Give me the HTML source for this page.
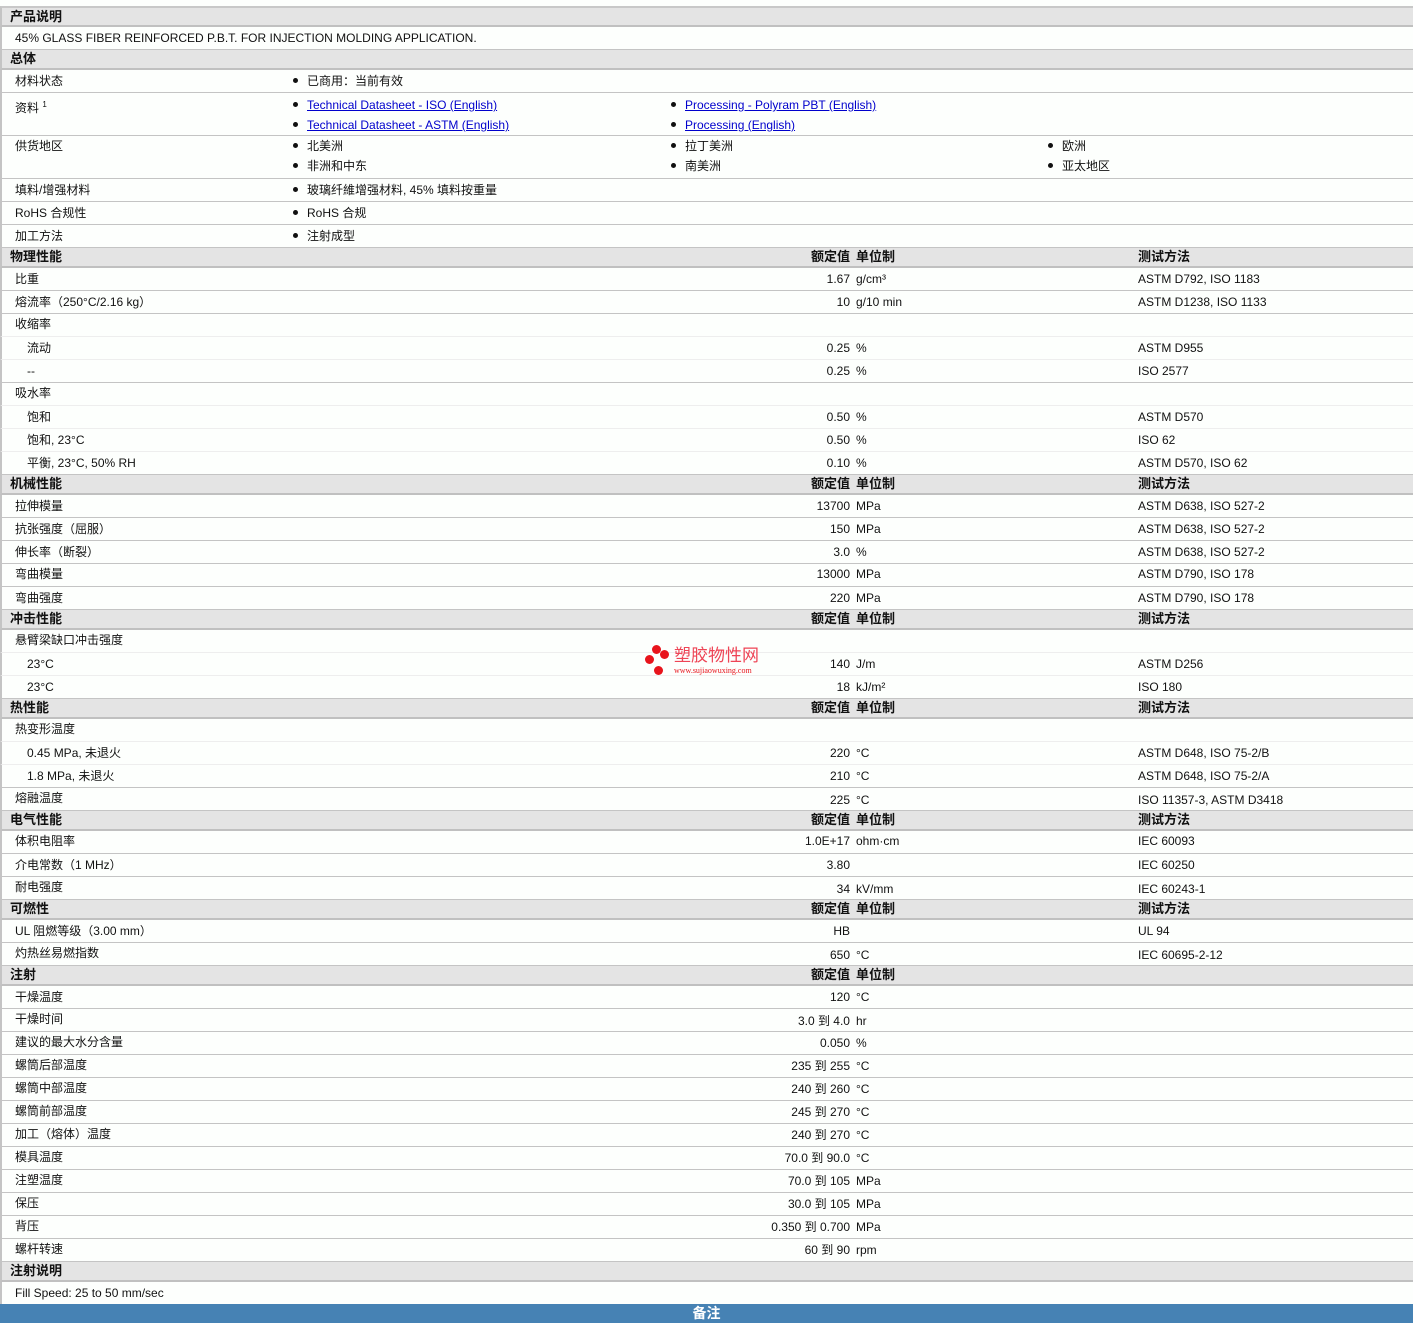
<!DOCTYPE html>
<html><head><meta charset="utf-8"><style>
*{margin:0;padding:0;box-sizing:border-box}
body{width:1413px;height:1323px;background:#fdfffd;font-family:"Liberation Sans","Noto Sans CJK SC",sans-serif;font-size:12px;color:#111;position:relative;overflow:hidden}
.row{position:absolute;left:0;width:1413px;border-bottom:1px solid #c4c4c4;border-left:2px solid #c4c4c4}
.h{background:#e4e4e4;border-bottom:2px solid #c0c0c0;font-weight:bold;font-size:13px}
.h.top{border-top:2px solid #c8c8c8}
.row span{position:absolute;white-space:nowrap}
.l{left:13px}.s{left:25px}.t{left:8px}
.v{right:563px;text-align:right}
.u{left:854px}.m{left:1136px}
.b1{left:291px}.b2{left:669px}.b3{left:1046px}
.b1:before,.b2:before,.b3:before{content:"";display:inline-block;width:5px;height:5px;border-radius:50%;background:#111;margin-right:9px;vertical-align:2px}
a{color:#00c;text-decoration:underline}
.blue{position:absolute;left:0;top:1304px;width:1413px;height:19px;background:#4682b4;color:#fff;font-weight:bold;text-align:center;font-size:14px;line-height:18px}
.wm{position:absolute;left:645px;top:645px;width:130px;height:35px}
.dot{position:absolute;width:9px;height:9px;border-radius:50%;background:#e8141c}
</style></head><body>

<div class="row h top" style="top:6px;height:21px;line-height:18px"><span class="t">产品说明</span></div>
<div class="row" style="top:27px;height:23px;line-height:22px"><span class="l">45% GLASS FIBER REINFORCED P.B.T. FOR INJECTION MOLDING APPLICATION.</span></div>
<div class="row h" style="top:50px;height:20px;line-height:18px"><span class="t">总体</span></div>
<div class="row" style="top:70px;height:23px;line-height:22px"><span class="l">材料状态</span><span class="b1">已商用：当前有效</span></div>
<div class="row" style="top:93px;height:43px;line-height:20px"><span class="l" style="top:2px">资料 <sup style="font-size:8px">1</sup></span>
<span class="b1" style="top:2px"><a>Technical Datasheet - ISO (English)</a></span><span class="b1" style="top:22px"><a>Technical Datasheet - ASTM (English)</a></span>
<span class="b2" style="top:2px"><a>Processing - Polyram PBT (English)</a></span><span class="b2" style="top:22px"><a>Processing (English)</a></span></div>
<div class="row" style="top:136px;height:43px;line-height:20px"><span class="l" style="top:0">供货地区</span>
<span class="b1" style="top:0">北美洲</span><span class="b1" style="top:20px">非洲和中东</span>
<span class="b2" style="top:0">拉丁美洲</span><span class="b2" style="top:20px">南美洲</span>
<span class="b3" style="top:0">欧洲</span><span class="b3" style="top:20px">亚太地区</span></div>
<div class="row" style="top:179px;height:23px;line-height:22px"><span class="l">填料/增强材料</span><span class="b1">玻璃纤維增强材料, 45% 填料按重量</span></div>
<div class="row" style="top:202px;height:23px;line-height:22px"><span class="l">RoHS 合规性</span><span class="b1">RoHS 合规</span></div>
<div class="row" style="top:225px;height:23px;line-height:22px"><span class="l">加工方法</span><span class="b1">注射成型</span></div>

<div class="row h" style="top:248px;height:20px;line-height:18px"><span class="t">物理性能</span><span class="v">额定值</span><span class="u">单位制</span><span class="m">测试方法</span></div>
<div class="row" style="top:268px;height:23px;line-height:22px"><span class="l">比重</span><span class="v">1.67</span><span class="u">g/cm³</span><span class="m">ASTM D792, ISO 1183</span></div>
<div class="row" style="top:291px;height:23px;line-height:22px"><span class="l">熔流率（250°C/2.16 kg）</span><span class="v">10</span><span class="u">g/10 min</span><span class="m">ASTM D1238, ISO 1133</span></div>
<div class="row" style="top:314px;height:23px;line-height:20px;border-bottom-color:#eee"><span class="l">收缩率</span></div>
<div class="row" style="top:337px;height:23px;line-height:22px;border-bottom-color:#eee"><span class="s">流动</span><span class="v">0.25</span><span class="u">%</span><span class="m">ASTM D955</span></div>
<div class="row" style="top:360px;height:23px;line-height:22px"><span class="s">--</span><span class="v">0.25</span><span class="u">%</span><span class="m">ISO 2577</span></div>
<div class="row" style="top:383px;height:23px;line-height:20px;border-bottom-color:#eee"><span class="l">吸水率</span></div>
<div class="row" style="top:406px;height:23px;line-height:22px;border-bottom-color:#eee"><span class="s">饱和</span><span class="v">0.50</span><span class="u">%</span><span class="m">ASTM D570</span></div>
<div class="row" style="top:429px;height:23px;line-height:22px;border-bottom-color:#eee"><span class="s">饱和, 23°C</span><span class="v">0.50</span><span class="u">%</span><span class="m">ISO 62</span></div>
<div class="row" style="top:452px;height:23px;line-height:22px"><span class="s">平衡, 23°C, 50% RH</span><span class="v">0.10</span><span class="u">%</span><span class="m">ASTM D570, ISO 62</span></div>

<div class="row h" style="top:475px;height:20px;line-height:18px"><span class="t">机械性能</span><span class="v">额定值</span><span class="u">单位制</span><span class="m">测试方法</span></div>
<div class="row" style="top:495px;height:23px;line-height:22px"><span class="l">拉伸模量</span><span class="v">13700</span><span class="u">MPa</span><span class="m">ASTM D638, ISO 527-2</span></div>
<div class="row" style="top:518px;height:23px;line-height:22px"><span class="l">抗张强度（屈服）</span><span class="v">150</span><span class="u">MPa</span><span class="m">ASTM D638, ISO 527-2</span></div>
<div class="row" style="top:541px;height:23px;line-height:22px"><span class="l">伸长率（断裂）</span><span class="v">3.0</span><span class="u">%</span><span class="m">ASTM D638, ISO 527-2</span></div>
<div class="row" style="top:564px;height:23px;line-height:20px"><span class="l">弯曲模量</span><span class="v">13000</span><span class="u">MPa</span><span class="m">ASTM D790, ISO 178</span></div>
<div class="row" style="top:587px;height:23px;line-height:22px"><span class="l">弯曲强度</span><span class="v">220</span><span class="u">MPa</span><span class="m">ASTM D790, ISO 178</span></div>

<div class="row h" style="top:610px;height:20px;line-height:18px"><span class="t">冲击性能</span><span class="v">额定值</span><span class="u">单位制</span><span class="m">测试方法</span></div>
<div class="row" style="top:630px;height:23px;line-height:20px;border-bottom-color:#eee"><span class="l">悬臂梁缺口冲击强度</span></div>
<div class="row" style="top:653px;height:23px;line-height:22px;border-bottom-color:#eee"><span class="s">23°C</span><span class="v">140</span><span class="u">J/m</span><span class="m">ASTM D256</span></div>
<div class="row" style="top:676px;height:23px;line-height:22px"><span class="s">23°C</span><span class="v">18</span><span class="u">kJ/m²</span><span class="m">ISO 180</span></div>

<div class="row h" style="top:699px;height:20px;line-height:18px"><span class="t">热性能</span><span class="v">额定值</span><span class="u">单位制</span><span class="m">测试方法</span></div>
<div class="row" style="top:719px;height:23px;line-height:20px;border-bottom-color:#eee"><span class="l">热变形温度</span></div>
<div class="row" style="top:742px;height:23px;line-height:22px;border-bottom-color:#eee"><span class="s">0.45 MPa, 未退火</span><span class="v">220</span><span class="u">°C</span><span class="m">ASTM D648, ISO 75-2/B</span></div>
<div class="row" style="top:765px;height:23px;line-height:22px"><span class="s">1.8 MPa, 未退火</span><span class="v">210</span><span class="u">°C</span><span class="m">ASTM D648, ISO 75-2/A</span></div>
<div class="row" style="top:788px;height:23px;line-height:20px"><span class="l">熔融温度</span><span class="v" style="top:2px">225</span><span class="u" style="top:2px">°C</span><span class="m" style="top:2px">ISO 11357-3, ASTM D3418</span></div>

<div class="row h" style="top:811px;height:20px;line-height:18px"><span class="t">电气性能</span><span class="v">额定值</span><span class="u">单位制</span><span class="m">测试方法</span></div>
<div class="row" style="top:831px;height:23px;line-height:20px"><span class="l">体积电阻率</span><span class="v">1.0E+17</span><span class="u">ohm·cm</span><span class="m">IEC 60093</span></div>
<div class="row" style="top:854px;height:23px;line-height:22px"><span class="l">介电常数（1 MHz）</span><span class="v">3.80</span><span class="m">IEC 60250</span></div>
<div class="row" style="top:877px;height:23px;line-height:20px"><span class="l">耐电强度</span><span class="v" style="top:2px">34</span><span class="u" style="top:2px">kV/mm</span><span class="m" style="top:2px">IEC 60243-1</span></div>

<div class="row h" style="top:900px;height:20px;line-height:18px"><span class="t">可燃性</span><span class="v">额定值</span><span class="u">单位制</span><span class="m">测试方法</span></div>
<div class="row" style="top:920px;height:23px;line-height:22px"><span class="l">UL 阻燃等级（3.00 mm）</span><span class="v">HB</span><span class="m">UL 94</span></div>
<div class="row" style="top:943px;height:23px;line-height:20px"><span class="l">灼热丝易燃指数</span><span class="v" style="top:2px">650</span><span class="u" style="top:2px">°C</span><span class="m" style="top:2px">IEC 60695-2-12</span></div>

<div class="row h" style="top:966px;height:20px;line-height:18px"><span class="t">注射</span><span class="v">额定值</span><span class="u">单位制</span></div>
<div class="row" style="top:986px;height:23px;line-height:22px"><span class="l">干燥温度</span><span class="v">120</span><span class="u">°C</span></div>
<div class="row" style="top:1009px;height:23px;line-height:20px"><span class="l">干燥时间</span><span class="v" style="top:2px">3.0 到 4.0</span><span class="u" style="top:2px">hr</span></div>
<div class="row" style="top:1032px;height:23px;line-height:20px"><span class="l">建议的最大水分含量</span><span class="v" style="top:1px">0.050</span><span class="u" style="top:1px">%</span></div>
<div class="row" style="top:1055px;height:23px;line-height:20px"><span class="l">螺筒后部温度</span><span class="v" style="top:1px">235 到 255</span><span class="u" style="top:1px">°C</span></div>
<div class="row" style="top:1078px;height:23px;line-height:20px"><span class="l">螺筒中部温度</span><span class="v" style="top:1px">240 到 260</span><span class="u" style="top:1px">°C</span></div>
<div class="row" style="top:1101px;height:23px;line-height:20px"><span class="l">螺筒前部温度</span><span class="v" style="top:1px">245 到 270</span><span class="u" style="top:1px">°C</span></div>
<div class="row" style="top:1124px;height:23px;line-height:20px"><span class="l">加工（熔体）温度</span><span class="v" style="top:1px">240 到 270</span><span class="u" style="top:1px">°C</span></div>
<div class="row" style="top:1147px;height:23px;line-height:20px"><span class="l">模具温度</span><span class="v" style="top:1px">70.0 到 90.0</span><span class="u" style="top:1px">°C</span></div>
<div class="row" style="top:1170px;height:23px;line-height:20px"><span class="l">注塑温度</span><span class="v" style="top:1px">70.0 到 105</span><span class="u" style="top:1px">MPa</span></div>
<div class="row" style="top:1193px;height:23px;line-height:20px"><span class="l">保压</span><span class="v" style="top:1px">30.0 到 105</span><span class="u" style="top:1px">MPa</span></div>
<div class="row" style="top:1216px;height:23px;line-height:20px"><span class="l">背压</span><span class="v" style="top:1px">0.350 到 0.700</span><span class="u" style="top:1px">MPa</span></div>
<div class="row" style="top:1239px;height:23px;line-height:20px"><span class="l">螺杆转速</span><span class="v" style="top:1px">60 到 90</span><span class="u" style="top:1px">rpm</span></div>

<div class="row h" style="top:1262px;height:20px;line-height:18px"><span class="t">注射说明</span></div>
<div class="row" style="top:1282px;height:22px;line-height:22px;border-bottom:none"><span class="l">Fill Speed: 25 to 50 mm/sec</span></div>
<div class="blue">备注</div>

<div class="wm">
<div class="dot" style="left:7px;top:0"></div>
<div class="dot" style="left:15px;top:5px"></div>
<div class="dot" style="left:0;top:10px"></div>
<div class="dot" style="left:9px;top:21px"></div>
<span style="position:absolute;left:29px;top:2px;color:#ee4455;font-size:17px;line-height:18px">塑胶物性网</span>
<span style="position:absolute;left:29px;top:21px;color:#e8141c;font-size:8px;font-family:'Liberation Serif',serif;line-height:10px">www.sujiaowuxing.com</span>
</div>
</body></html>
